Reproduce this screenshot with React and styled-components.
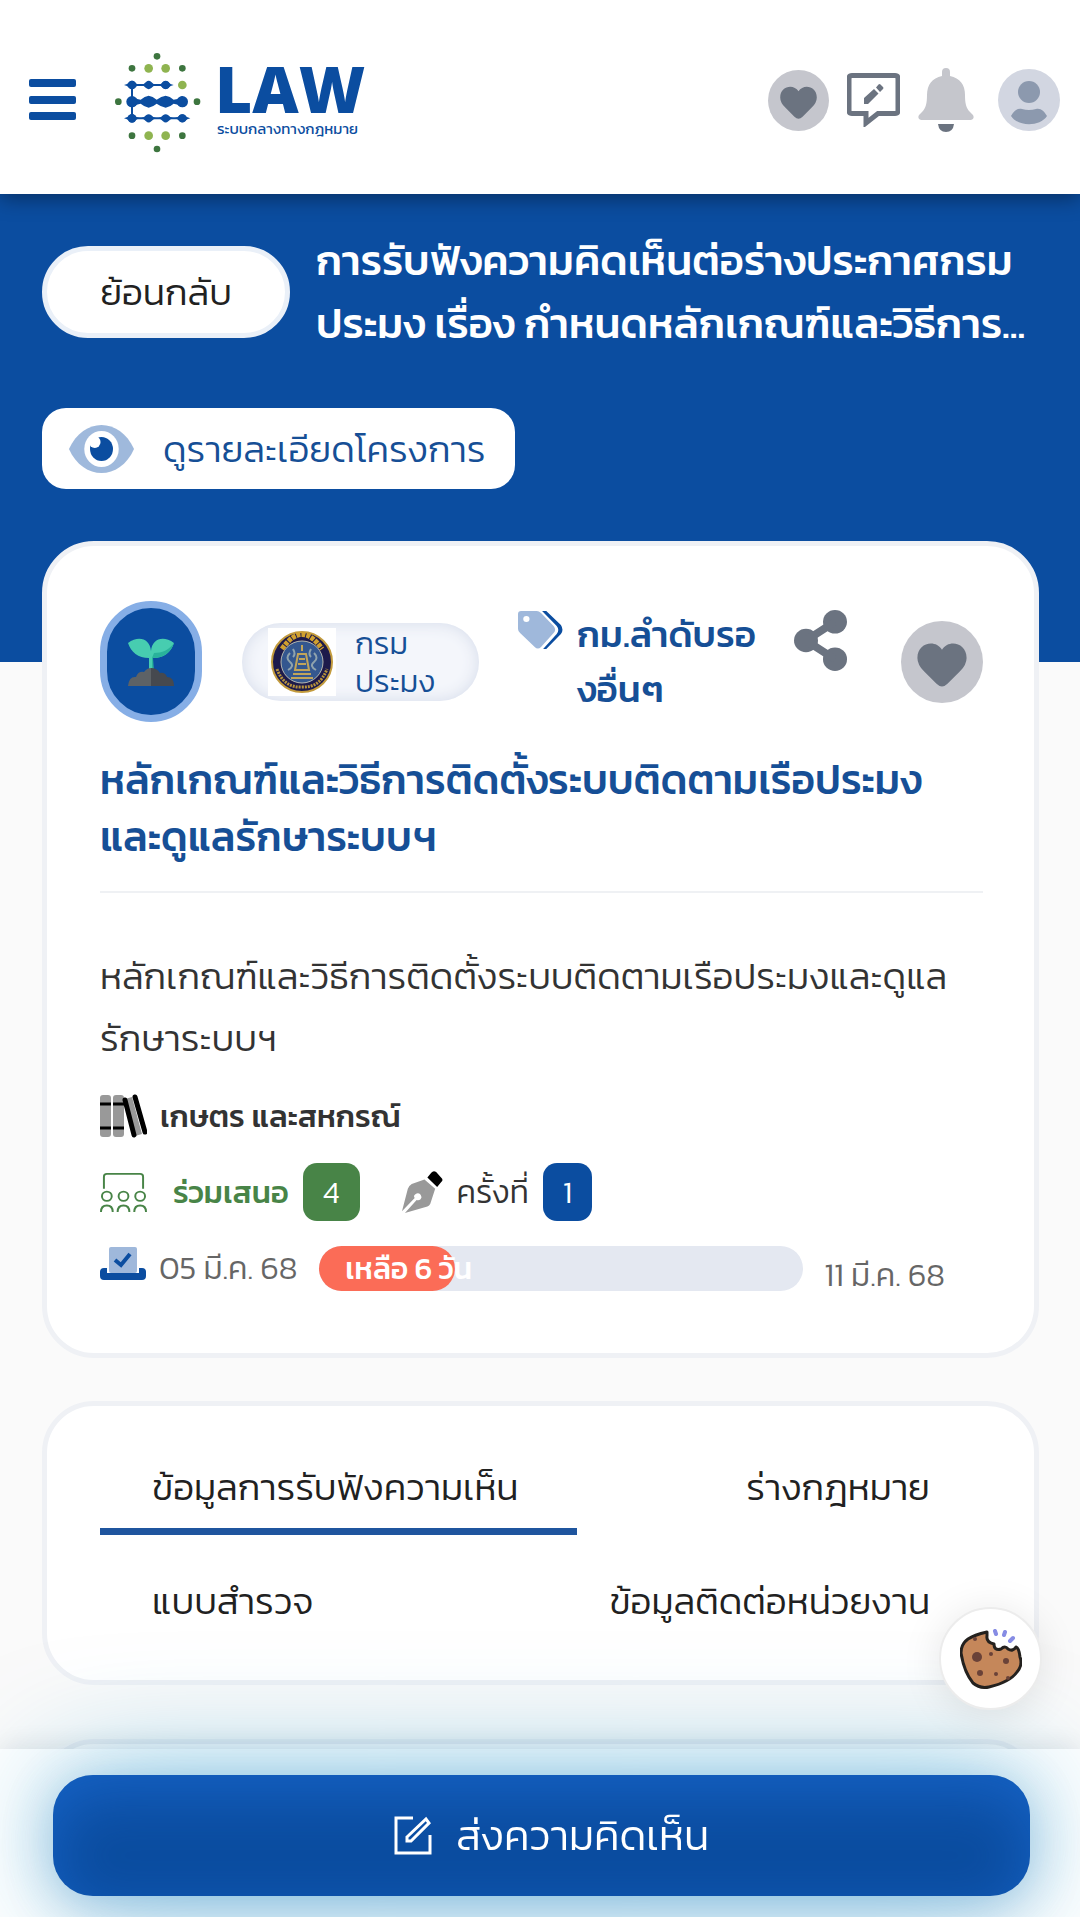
import React, { useState } from 'react';
import styled, { createGlobalStyle } from 'styled-components';

const blue = '#0b4da0';
const textBlue = '#164f96';
const slate = '#6b7380';

const GlobalStyle = createGlobalStyle`
  *, *::before, *::after {
    box-sizing: border-box;
  }
  body {
    margin: 0;
    background: #fafafa;
    color: #212121;
    font-family: Kanit, 'Noto Sans Thai', 'Noto Sans', sans-serif;
    font-weight: 300;
    font-size: 32px;
  }
  button {
    font: inherit;
    color: inherit;
    border: 0;
    padding: 0;
    background: none;
    cursor: pointer;
  }
  svg {
    display: block;
    flex: none;
  }
`;

const Page = styled.div`
  min-height: 100vh;
  overflow: hidden;
`;

const Header = styled.header`
  position: relative;
  z-index: 2;
  display: flex;
  align-items: center;
  height: 194px;
  padding: 6px 19px 0 29px;
  background: #fff;
  box-shadow: 0 4px 20px rgba(0, 0, 0, 0.4);
`;

const Brand = styled.a`
  display: flex;
  align-items: center;
  gap: 14px;
  margin: 6px 0 0 39px;
  color: ${blue};
  text-decoration: none;
`;

const BrandText = styled.span`
  display: flex;
  flex-direction: column;
  padding-bottom: 8px;
`;

const BrandName = styled.span`
  font: 800 64px/60px 'Open Sans', sans-serif;
`;

const BrandTagline = styled.span`
  padding-left: 2px;
  font-size: 15px;
  font-weight: 400;
  line-height: 20px;
  white-space: nowrap;
`;

const HeaderTools = styled.nav`
  display: flex;
  align-items: center;
  gap: 18px;
  margin-left: auto;

  button:last-child {
    margin-left: 6px;
  }
`;

const Hero = styled.section`
  padding: 35px 42px 173px;
  background: ${blue};
`;

const HeroTop = styled.div`
  display: flex;
  align-items: center;
  gap: 26px;
`;

const BackButton = styled.button`
  flex: none;
  width: 248px;
  height: 92px;
  border: 5px solid #eaf0f8;
  border-radius: 46px;
  background: #fff;
  font-size: 37px;
`;

const HeroTitle = styled.h1`
  margin: 0;
  color: #fff;
  font-size: 42px;
  font-weight: 500;
  line-height: 63px;
  white-space: nowrap;
`;

const DetailButton = styled.button`
  display: flex;
  align-items: center;
  gap: 28px;
  height: 81px;
  margin-top: 53px;
  padding: 0 30px 0 26px;
  border-radius: 24px;
  background: #fff;
  color: ${textBlue};
  font-size: 37px;
  white-space: nowrap;
`;

const Content = styled.main`
  display: flex;
  flex-direction: column;
  gap: 43px;
  margin-top: -121px;
  padding: 0 41px 0 42px;
`;

const Card = styled.section`
  padding: 55px 51px 63px 53px;
  border: 5px solid #eff1f5;
  border-radius: 52px;
  background: #fff;
`;

const TabCard = styled(Card)`
  padding: 39px 51px 31px 53px;
`;

const NextCard = styled(Card)`
  margin-top: 11px;
`;

const MetaRow = styled.div`
  display: flex;
  align-items: center;
  height: 121px;
`;

const TopicBadge = styled.span`
  display: flex;
  flex: none;
  align-items: center;
  justify-content: center;
  width: 102px;
  height: 121px;
  border: 7px solid #86aee6;
  border-radius: 51px;
  background: ${blue};
`;

const AgencyPill = styled.a`
  display: flex;
  flex: none;
  align-items: center;
  gap: 19px;
  width: 237px;
  height: 78px;
  margin-left: 40px;
  padding-left: 26px;
  border-radius: 39px;
  background: #f4f6fb;
  box-shadow: inset 0 0 16px #d5dcea;
  color: ${textBlue};
  font-size: 31px;
  line-height: 38px;
  text-decoration: none;
`;

const LawType = styled.div`
  display: flex;
  flex: 1;
  align-self: flex-start;
  gap: 14px;
  margin-left: 39px;
  padding-top: 6px;
  color: ${textBlue};
  font-size: 37px;
  font-weight: 500;
  line-height: 55px;
  white-space: nowrap;

  svg {
    margin-top: 4px;
  }
`;

const ShareButton = styled.button`
  align-self: flex-start;
  padding-top: 9px;
`;

const SaveButton = styled.button`
  margin-left: 54px;
`;

const CardTitle = styled.h2`
  margin: 0;
  padding: 29px 0 26px;
  border-bottom: 2px solid #eff1f4;
  color: ${textBlue};
  font-size: 41px;
  font-weight: 500;
  line-height: 57px;
`;

const Summary = styled.p`
  margin: 52px 0 0;
  color: #333;
  font-size: 37px;
  line-height: 62px;
  white-space: nowrap;
`;

const InfoRow = styled.div`
  display: flex;
  align-items: center;
  height: ${({ $tall }) => ($tall ? 58 : 44)}px;
  margin-top: 25px;
`;

const InfoLabel = styled.span`
  margin-left: ${({ $gap }) => $gap}px;
  color: ${({ $color }) => $color || '#333'};
  font-size: ${({ $strong }) => ($strong ? 31 : 32)}px;
  font-weight: ${({ $strong }) => ($strong ? 500 : 300)};
  white-space: nowrap;
`;

const CountBadge = styled.span`
  display: flex;
  align-items: center;
  justify-content: center;
  height: 58px;
  margin: 0 41px 0 14px;
  padding: 0 20px;
  border-radius: 14px;
  background: ${({ $color }) => $color};
  color: #fff;
  font-size: 31px;
`;

const Track = styled.div`
  flex: 1;
  height: 45px;
  margin: 0 21px 0 22px;
  border-radius: 23px;
  background: #e4e8f1;
`;

const Fill = styled.div`
  display: flex;
  align-items: center;
  height: 45px;
  padding-left: 26px;
  border-radius: 23px;
  background: #fb6c57;
  color: #fff;
  font-size: 30px;
  font-weight: 500;
  white-space: nowrap;
`;

const EndDate = styled(InfoLabel)`
  margin: 14px 38px 0 0;
`;

const TabList = styled.div`
  display: grid;
  grid-template-columns: minmax(0, 54fr) minmax(0, 46fr);
  row-gap: 24px;
`;

const Tab = styled.button`
  height: 90px;
  padding: ${({ $end }) => ($end ? '0 53px 0 0' : '0 0 0 52px')};
  border-bottom: 7px solid ${({ $active }) => ($active ? '#1f559e' : 'transparent')};
  font-size: 37px;
  text-align: ${({ $end }) => ($end ? 'right' : 'left')};
  white-space: nowrap;
`;

const ActionBar = styled.footer`
  position: fixed;
  right: 0;
  bottom: 0;
  left: 0;
  z-index: 3;
  padding: 26px 50px 21px 53px;
  background: #fff;
  box-shadow: 0 0 30px rgba(0, 40, 60, 0.12);
`;

const SubmitButton = styled.button`
  display: flex;
  align-items: center;
  justify-content: center;
  gap: 24px;
  width: 100%;
  height: 121px;
  padding-left: 20px;
  border-radius: 40px;
  background: ${blue};
  box-shadow: 0 0 120px rgba(20, 150, 205, 0.5), 0 10px 50px rgba(30, 100, 170, 0.3),
    inset 0 20px 60px rgba(32, 118, 232, 0.5);
  color: #fff;
  font-size: 42px;
`;

const CookieButton = styled.button`
  position: fixed;
  right: 38px;
  bottom: 207px;
  z-index: 4;
  display: flex;
  align-items: center;
  justify-content: center;
  width: 103px;
  height: 103px;
  border: 2px solid #ececec;
  border-radius: 50%;
  background: #fff;
  box-shadow: 0 4px 40px rgba(0, 0, 0, 0.1);
`;

const MenuIcon = () => (
  <svg width="47" height="42" viewBox="0 0 47 42" fill={blue}>
    <rect width="47" height="8" rx="2" />
    <rect y="17" width="47" height="8" rx="2" />
    <rect y="33" width="47" height="8" rx="2" />
  </svg>
);

const LogoMark = () => {
  const dark = [[470, 79], [395, 115], [546, 115], [354, 215], [590, 215], [395, 317], [546, 317], [470, 357]];
  const light = [[445, 115], [496, 115], [546, 165], [445, 317], [496, 317]];
  return (
    <svg width="86" height="102" viewBox="344 66 258 306">
      {dark.map(([x, y]) => <circle key={`${x}-${y}`} cx={x} cy={y} r="10" fill="#3d753f" />)}
      {light.map(([x, y]) => <circle key={`${x}-${y}`} cx={x} cy={y} r="13" fill="#8fb450" />)}
      <g stroke={blue} strokeWidth="6">
        <path d="M395 165h101M395 265h151M395 165v100" />
      </g>
      <g fill={blue}>
        {[395, 445, 496].map(x => (
          <path key={x} d={`M${x - 24} 165q10-1 16-9 8-7 16 0 6 8 16 9-10 1-16 9-8 7-16 0-6-8-16-9z`} />
        ))}
        {[395, 445, 496, 546].map(x => (
          <path key={x} d={`M${x - 24} 265q10-1 16-9 8-7 16 0 6 8 16 9-10 1-16 9-8 7-16 0-6-8-16-9z`} />
        ))}
        <circle cx="395" cy="165" r="13" />
        <circle cx="496" cy="165" r="12" />
        <circle cx="395" cy="265" r="13" />
        <circle cx="546" cy="265" r="12" />
        <path d="M395 198q14 10 26 11 12-10 24-12 12 2 24 12 14-10 27-12 13 2 24 12 13-1 26-11v34q-13-10-26-11-11 10-24 12-13-2-27-12-12 10-24 12-12-2-24-12-12 1-26 11z" />
        <circle cx="395" cy="215" r="17" />
        <circle cx="546" cy="215" r="17" />
      </g>
    </svg>
  );
};

const HeartIcon = ({ width, height }) => (
  <svg width={width} height={height} viewBox="0 0 60 60" preserveAspectRatio="none">
    <circle cx="30" cy="30" r="30" fill="#c5c6cd" />
    <path d="M30 48Q28 48 26 46L17 37Q12 32 12 27C12 16 25 13 30 21 35 13 48 16 48 27Q48 32 43 37L34 46Q32 48 30 48z" fill={slate} />
  </svg>
);

const CommentEditIcon = () => (
  <svg width="53" height="54" viewBox="0 0 53 54">
    <path d="M5 2.500h43q3 0 3 3v32q0 3-3 3H31L19 50v-9.500H5q-3 0-3-3v-32q0-3 3-3z" fill="none" stroke={slate} strokeWidth="5" />
    <path d="M17 25l10-9 4.500 4.500L21 31h-4zM29 14.500l2.500-3q1-1 2 0l2.500 2.500q1 1 0 2L33 19z" fill={slate} />
  </svg>
);

const BellIcon = () => (
  <svg width="56" height="64" viewBox="0 0 56 64">
    <path d="M28 0q4 0 4 4v4c10 2 15 9 15 19 0 8 1 13 5 17l3 3q2 4-2 5H3q-4-1-2-5l3-3c4-4 5-9 5-17C9 17 14 10 24 8V4q0-4 4-4z" fill="#c5c6cc" />
    <path d="M20 56h16q-1 8-8 8t-8-8z" fill={slate} />
  </svg>
);

const AvatarIcon = () => (
  <svg width="63" height="63" viewBox="0 0 63 63">
    <circle cx="31" cy="31" r="31" fill="#d2d6e1" />
    <circle cx="31" cy="23" r="11" fill="#8c99ae" />
    <path d="M24 40q7 2 14 0c5-1 8 2 11 7-7 11-29 11-36 0 3-5 6-8 11-7z" fill="#8c99ae" />
  </svg>
);

const EyeIcon = () => (
  <svg width="67" height="48" viewBox="0 0 70 48" preserveAspectRatio="none">
    <path d="M1 24C16-8 54-8 69 24 54 56 16 56 1 24z" fill="#9fb9dc" />
    <circle cx="35" cy="24" r="18" fill="#fff" />
    <circle cx="35" cy="24" r="12" fill={blue} />
    <circle cx="28" cy="17" r="6" fill="#fff" />
  </svg>
);

const SproutIcon = () => (
  <svg width="46" height="48" viewBox="0 0 46 48">
    <path d="M21 34V20C10 20 3 14 0 5 11-3 22 1 23 13 24 1 35-3 46 5 43 14 36 20 25 20v14z" fill="#47cdb0" />
    <path d="M25 20c11 0 18-6 21-15-5 7-12 10-20 10l-2 5v14h2z" fill="#29b29b" />
    <path d="M0 48q1-10 8-9 2-6 8-5 3-4 7-4v18z" fill="#5d6266" />
    <path d="M23 30q6 0 9 5 5-1 7 4 7 0 7 9H23z" fill="#46494f" />
  </svg>
);

const SealIcon = () => (
  <svg width="68" height="68" viewBox="0 0 68 68">
    <rect width="68" height="68" fill="#fff" />
    <circle cx="34" cy="34" r="30" fill="#1d1a4b" stroke="#c39b3d" strokeWidth="2" />
    <path d="M14 21q20-29 40 0" fill="none" stroke="#d0a02f" strokeWidth="5" strokeDasharray="4 1" />
    <path d="M9 41q7 19 25 18 18 1 25-18" fill="none" stroke="#b8933c" strokeWidth="3" strokeDasharray="2 1" />
    <circle cx="34" cy="34" r="21" fill="#34578f" stroke="#b5b8b0" />
    <path d="M34 17v6M30 26h8l3 16H27zM25 46h18M23 50h22M31 31h6M30 36h8" fill="none" stroke="#c1a45a" strokeWidth="2" />
    <path d="M22 25q-5 5 0 9t-2 8M46 25q5 5 0 9t2 8M25 21q3 5 0 8M43 21q-3 5 0 8" fill="none" stroke="#8fa3ad" strokeWidth="2" />
  </svg>
);

const TagsIcon = () => (
  <svg width="45" height="38" viewBox="0 0 43 38" preserveAspectRatio="none">
    <path d="M3 0h15q2 0 4 2l12 13q3 4 0 7L22 36q-3 3-6 0L2 22q-2-2-2-4V3q0-3 3-3z" fill="#9fb8db" />
    <circle cx="8" cy="8" r="3" fill="#fff" />
    <path d="M23 0h4l14 14q3 5 0 9L27 38h-3l13-15q3-4 0-8z" fill={blue} />
  </svg>
);

const ShareIcon = () => (
  <svg width="53" height="61" viewBox="0 0 53 62" preserveAspectRatio="none" fill={slate}>
    <circle cx="41" cy="12" r="12" />
    <circle cx="41" cy="50" r="12" />
    <circle cx="12" cy="31" r="12" />
    <path d="M41 12L12 31l29 19" fill="none" stroke={slate} strokeWidth="8" />
  </svg>
);

const BooksIcon = () => (
  <svg width="47" height="44" viewBox="0 0 47 44">
    <rect y="1" width="11" height="42" rx="3" fill="#999" />
    <rect x="13" y="1" width="11" height="42" rx="3" fill="#999" />
    <path d="M0 10h11M13 10h11M0 34h11M13 34h11" stroke="#000" strokeWidth="3" />
    <path d="M25 5l7-2 10 37-7 2z" fill="#999" />
    <path d="M25 6l9 35M35 3l10 35" stroke="#000" strokeWidth="5" strokeLinecap="round" />
  </svg>
);

const PeopleIcon = () => (
  <svg width="47" height="39" viewBox="0 0 48 42" preserveAspectRatio="none" fill="none" stroke="#488447" strokeWidth="2">
    <path d="M4 17V4q0-3 3-3h34q3 0 3 3v13" />
    {[7, 24, 41].map(x => (
      <g key={x}>
        <circle cx={x} cy="25" r="5" />
        <path d={`M${x - 6} 42q0-7 6-7t6 7`} />
      </g>
    ))}
  </svg>
);

const PenIcon = () => (
  <svg width="42" height="43" viewBox="0 0 43 46" preserveAspectRatio="none">
    <path d="M24 9l11 10-5 16q-1 2-3 3L4 45l12-14q4 1 5-3-1-5-5-4-4 2-2 5L1 43 7 19q1-3 4-5z" fill="#999" />
    <path d="M27 7l4-5q2-3 5-1l5 6q3 3 0 5l-4 5z" fill="#000" />
  </svg>
);

// the extra room below the tray lifts the icon above the row's centre line
const BallotIcon = () => (
  <svg width="46" height="42" viewBox="0 0 46 42">
    <rect x="9" width="28" height="26" rx="2" fill="#9fb8db" />
    <path d="M15 13l6 5 9-11" fill="none" stroke={blue} strokeWidth="4" />
    <path d="M4 21h3v5h32v-5h3q4 0 4 4v4q0 4-4 4H4q-4 0-4-4v-4q0-4 4-4z" fill={blue} />
  </svg>
);

const EditIcon = () => (
  <svg width="38" height="39" viewBox="0 0 38 39" fill="none" stroke="#fff" strokeWidth="3">
    <path d="M19 2H2v35h34V19" />
    <path d="M13 21L32 3l3 4-18 18h-4z" />
  </svg>
);

const CookieIcon = () => (
  <svg width="62" height="60" viewBox="0 0 62 60">
    <path d="M27 3Q14 6 8 10 1 15 1 24q3 19 12 30 7 6 16 4 21-5 28-15 6-7 3-15-1-9-4-10-3 5-8 2-3-4-7 0-7 2-7-5-8-2-7-8z" fill="#c5875a" stroke="#24211e" strokeWidth="3" strokeLinejoin="round" />
    <g fill="#6a4238">
      <circle cx="17" cy="28" r="5" />
      <circle cx="46" cy="32" r="3" />
      <circle cx="31" cy="25" r="2" />
      <circle cx="20" cy="44" r="3" />
      <circle cx="36" cy="45" r="2" />
      <circle cx="48" cy="49" r="2" />
      <circle cx="15" cy="10" r="2" />
    </g>
    <path d="M35 2l1 3M45 3l-1 3M53 9l-3 3" stroke="#868ce4" strokeWidth="4" strokeLinecap="round" />
  </svg>
);

const tabs = [
  'ข้อมูลการรับฟังความเห็น',
  'ร่างกฎหมาย',
  'แบบสำรวจ',
  'ข้อมูลติดต่อหน่วยงาน',
];

const App = () => {
  const [activeTab, setActiveTab] = useState(0);

  return (
    <Page>
      <GlobalStyle />
      <Header>
        <button type="button" aria-label="เมนู"><MenuIcon /></button>
        <Brand href="#home">
          <LogoMark />
          <BrandText>
            <BrandName>LAW</BrandName>
            <BrandTagline>ระบบกลางทางกฎหมาย</BrandTagline>
          </BrandText>
        </Brand>
        <HeaderTools>
          <button type="button" aria-label="รายการโปรด"><HeartIcon width={61} height={61} /></button>
          <button type="button" aria-label="ความคิดเห็น"><CommentEditIcon /></button>
          <button type="button" aria-label="การแจ้งเตือน"><BellIcon /></button>
          <button type="button" aria-label="บัญชีผู้ใช้"><AvatarIcon /></button>
        </HeaderTools>
      </Header>

      <Hero>
        <HeroTop>
          <BackButton type="button">ย้อนกลับ</BackButton>
          <HeroTitle>
            การรับฟังความคิดเห็นต่อร่างประกาศกรม<br />
            ประมง เรื่อง กำหนดหลักเกณฑ์และวิธีการ...
          </HeroTitle>
        </HeroTop>
        <DetailButton type="button"><EyeIcon />ดูรายละเอียดโครงการ</DetailButton>
      </Hero>

      <Content>
        <Card>
          <MetaRow>
            <TopicBadge><SproutIcon /></TopicBadge>
            <AgencyPill href="#agency">
              <SealIcon />
              <span>กรม<br />ประมง</span>
            </AgencyPill>
            <LawType>
              <TagsIcon />
              <span>กม.ลำดับรอ<br />งอื่นๆ</span>
            </LawType>
            <ShareButton type="button" aria-label="แชร์"><ShareIcon /></ShareButton>
            <SaveButton type="button" aria-label="บันทึก"><HeartIcon width={82} height={82} /></SaveButton>
          </MetaRow>
          <CardTitle>หลักเกณฑ์และวิธีการติดตั้งระบบติดตามเรือประมง<br />และดูแลรักษาระบบฯ</CardTitle>
          <Summary>หลักเกณฑ์และวิธีการติดตั้งระบบติดตามเรือประมงและดูแล<br />รักษาระบบฯ</Summary>
          <InfoRow>
            <BooksIcon />
            <InfoLabel $gap={13} $strong>เกษตร และสหกรณ์</InfoLabel>
          </InfoRow>
          <InfoRow $tall>
            <PeopleIcon />
            <InfoLabel $gap={26} $color="#488447" $strong>ร่วมเสนอ</InfoLabel>
            <CountBadge $color="#488447">4</CountBadge>
            <PenIcon />
            <InfoLabel $gap={14}>ครั้งที่</InfoLabel>
            <CountBadge $color={blue}>1</CountBadge>
          </InfoRow>
          <InfoRow>
            <BallotIcon />
            <InfoLabel $gap={13} $color="#666">05 มี.ค. 68</InfoLabel>
            <Track>
              <Fill style={{ width: '28%' }}>เหลือ 6 วัน</Fill>
            </Track>
            <EndDate $color="#666">11 มี.ค. 68</EndDate>
          </InfoRow>
        </Card>

        <TabCard>
          <TabList role="tablist">
            {tabs.map((label, i) => (
              <Tab
                key={label}
                type="button"
                role="tab"
                aria-selected={activeTab === i}
                $active={activeTab === i}
                $end={i % 2 === 1}
                onClick={() => setActiveTab(i)}
              >
                {label}
              </Tab>
            ))}
          </TabList>
        </TabCard>

        <NextCard />
      </Content>

      <CookieButton type="button" aria-label="ตั้งค่าคุกกี้"><CookieIcon /></CookieButton>
      <ActionBar>
        <SubmitButton type="button"><EditIcon />ส่งความคิดเห็น</SubmitButton>
      </ActionBar>
    </Page>
  );
};

export default App;
